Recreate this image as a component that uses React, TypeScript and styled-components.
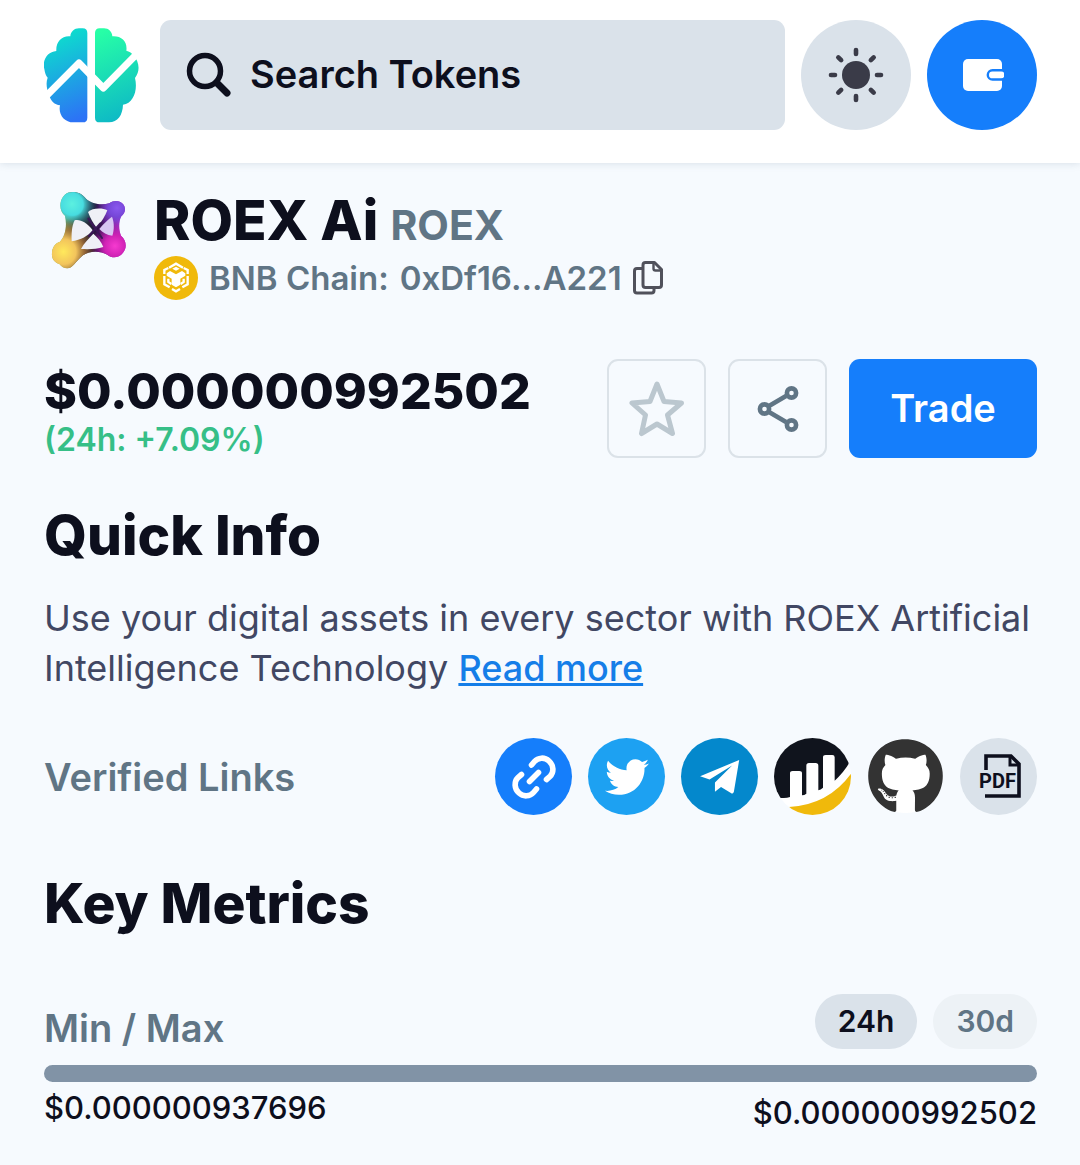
import React, { useState } from "react";
import styled, { createGlobalStyle } from "styled-components";
import { FaGithub, FaTwitter } from "react-icons/fa";

const GlobalStyle = createGlobalStyle`
  * {
    box-sizing: border-box;
  }
  body {
    margin: 0;
    background: #f6fafe;
    color: #0d0f1d;
    font-family: Inter, "Liberation Sans", sans-serif;
  }
  button, input {
    font-family: inherit;
  }
`;

const Header = styled.header`
  display: flex;
  align-items: center;
  gap: 16px;
  padding: 20px 43px 33px 44px;
  background: #fff;
  box-shadow: 0 0 8px rgba(90, 115, 135, 0.22);
`;

const HomeLink = styled.a`
  display: flex;
  flex: none;
  margin-right: 5px;
`;

const SearchBox = styled.label`
  display: flex;
  flex: 1;
  align-items: center;
  gap: 18px;
  min-width: 0;
  height: 110px;
  padding: 0 26px;
  border-radius: 11px;
  background: #dae2ea;
`;

const SearchInput = styled.input`
  flex: 1;
  min-width: 0;
  padding: 0 0 2px;
  border: 0;
  outline: none;
  background: transparent;
  color: #0d0f1d;
  font-size: 38px;
  font-weight: 600;
  &::placeholder {
    color: #0d0f1d;
    opacity: 1;
  }
`;

const RoundButton = styled.button<{ $primary?: boolean }>`
  display: flex;
  flex: none;
  align-items: center;
  justify-content: center;
  width: 110px;
  height: 110px;
  padding: 0;
  border: 0;
  border-radius: 50%;
  background: ${({ $primary }) => ($primary ? "#157efb" : "#dae2ea")};
  cursor: pointer;
`;

const Content = styled.main`
  padding: 23px 43px 24px 44px;
`;

const TokenHead = styled.section`
  display: flex;
  align-items: flex-start;
  gap: 22px;
`;

const TokenTitle = styled.h1`
  margin: 0;
  font-size: 55px;
  font-weight: 800;
  line-height: 68px;
`;

const TokenSymbol = styled.span`
  color: #607585;
  font-size: 41px;
  font-weight: 700;
  line-height: 1;
`;

const ChainRow = styled.div`
  display: flex;
  align-items: center;
  gap: 11px;
  margin-top: 2px;
  color: #607585;
  font-size: 33px;
  font-weight: 600;
  line-height: 44px;
`;

const IconButton = styled.button`
  display: flex;
  padding: 0;
  border: 0;
  background: none;
  cursor: pointer;
`;

const PriceRow = styled.section`
  display: flex;
  align-items: flex-end;
  justify-content: space-between;
  margin-top: 59px;
`;

const Price = styled.div`
  font-size: 50px;
  font-weight: 800;
  line-height: 62px;
`;

const Change = styled.div`
  color: #36bf87;
  font-size: 32px;
  font-weight: 600;
  line-height: 36px;
`;

const Actions = styled.div`
  display: flex;
  gap: 22px;
`;

const OutlineButton = styled.button`
  display: flex;
  align-items: center;
  justify-content: center;
  width: 99px;
  height: 99px;
  padding: 0;
  border: 2px solid #dbe2e8;
  border-radius: 11px;
  background: transparent;
  cursor: pointer;
`;

const TradeButton = styled.button`
  width: 188px;
  height: 99px;
  padding: 0 0 2px;
  border: 0;
  border-radius: 11px;
  background: #157efb;
  color: #fff;
  font-size: 38px;
  font-weight: 600;
  cursor: pointer;
`;

const Heading = styled.h2<{ $top: number }>`
  margin: ${({ $top }) => $top}px 0 0;
  font-size: 55px;
  font-weight: 800;
  line-height: 66px;
`;

const About = styled.p`
  margin: 25px 0 0;
  color: #414763;
  font-size: 36px;
  line-height: 50px;
`;

const ReadMore = styled.a`
  color: #157ee8;
  font-weight: 500;
  text-decoration: underline;
`;

const LinksRow = styled.section`
  display: flex;
  align-items: center;
  justify-content: space-between;
  margin-top: 45px;
`;

const Label = styled.h3`
  margin: 0;
  color: #607585;
  font-size: 38px;
  font-weight: 600;
  line-height: 42px;
`;

const LinkList = styled.nav`
  display: flex;
  gap: 16px;
`;

const RoundLink = styled.a<{ $bg?: string }>`
  display: flex;
  align-items: center;
  justify-content: center;
  width: 77px;
  height: 77px;
  overflow: hidden;
  border-radius: 50%;
  background: ${({ $bg }) => $bg || "transparent"};
  color: #fff;
`;

const GithubBadge = styled.span`
  display: flex;
  border-radius: 50%;
  background: radial-gradient(circle, #fff 36px, transparent 37px);
  color: #333;
`;

const RangeHead = styled.div`
  display: flex;
  align-items: flex-end;
  justify-content: space-between;
  margin-top: 58px;
`;

const Periods = styled.div`
  display: flex;
  gap: 16px;
`;

const PeriodButton = styled.button<{ $active: boolean }>`
  height: 55px;
  padding: 0 23px 2px;
  border: 0;
  border-radius: 28px;
  background: ${({ $active }) => ($active ? "#dae2ea" : "#edf2f6")};
  color: ${({ $active }) => ($active ? "#0d0f1d" : "#607585")};
  font-size: 30px;
  font-weight: 600;
  cursor: pointer;
`;

const Track = styled.div`
  height: 17px;
  margin-top: 16px;
  overflow: hidden;
  border-radius: 9px;
  background: #dae2ea;
`;

const Fill = styled.div`
  height: 100%;
  background: #8193a6;
`;

const RangeValues = styled.div`
  display: flex;
  align-items: flex-start;
  justify-content: space-between;
  margin-top: 4px;
  font-size: 31px;
  font-weight: 500;
`;

const MinValue = styled.span`
  line-height: 44px;
`;

const MaxValue = styled.span`
  line-height: 54px;
`;

const BrainLogo = () => (
  <svg width="95" height="95" viewBox="42 55 285 285">
    <defs>
      <linearGradient id="brainLeft" x1="0.4" y1="0" x2="0.6" y2="1">
        <stop offset="0" stopColor="#0be3cb" />
        <stop offset="1" stopColor="#2c73f6" />
      </linearGradient>
      <linearGradient id="brainRight" x1="0.3" y1="0" x2="0.5" y2="1">
        <stop offset="0" stopColor="#27ffa6" />
        <stop offset="1" stopColor="#0db8c6" />
      </linearGradient>
    </defs>
    <path
      fill="url(#brainLeft)"
      d="M172 70Q172 56 158 56H147C133 56 122 66 121 80C96 77 77 97 79 124C52 126 36 152 43 178C45 190 47 197 53 204C47 220 50 238 57 255C62 274 74 285 90 287C84 314 103 338 130 338H158Q172 338 172 324Z"
    />
    <path
      fill="url(#brainRight)"
      d="M195 70Q195 56 209 56H222C236 56 246 66 247 80C275 78 293 96 289 123C298 125 304 129 309 135C329 156 331 185 315 205C324 242 310 281 279 285C278 316 263 338 237 338H209Q195 338 195 324Z"
    />
    <path
      fill="none"
      stroke="#fff"
      strokeWidth="21"
      strokeLinejoin="round"
      d="M42 266L147 160L220 235L330 123"
    />
  </svg>
);

const SearchIcon = () => (
  <svg width="46" height="46" viewBox="0 0 46 46" fill="none" stroke="#0d0f1d" strokeLinecap="round">
    <circle cx="19" cy="19" r="15.500" strokeWidth="5.500" />
    <path strokeWidth="7" d="M31.500 31.500L41 41" />
  </svg>
);

const SunIcon = () => (
  <svg width="56" height="56" viewBox="-28 -28 56 56">
    <circle r="14" fill="#3a3b48" />
    {[0, 45, 90, 135, 180, 225, 270, 315].map((angle) => (
      <path
        key={angle}
        transform={`rotate(${angle})`}
        stroke="#3a3b48"
        strokeWidth="4.6"
        strokeLinecap="round"
        d="M0 -25V-21"
      />
    ))}
  </svg>
);

const WalletIcon = () => (
  <svg width="44" height="44" viewBox="0 0 44 44">
    <rect x="3" y="6" width="39" height="32" rx="5" fill="#fff" />
    <path fill="#157efb" d="M44 16H32.500a5.900 5.900 0 0 0 0 11.800H44z" />
    <rect x="29" y="18.500" width="15.500" height="6.800" rx="3.400" fill="#fff" />
  </svg>
);

const RoexLogo = () => (
  <svg width="88" height="88" viewBox="12 18 264 264">
    <defs>
      <radialGradient id="roexCyan" gradientUnits="userSpaceOnUse" cx="96" cy="72" r="78">
        <stop offset="0" stopColor="#5cf0e0" />
        <stop offset="0.42" stopColor="#48dde0" />
        <stop offset="1" stopColor="#1c6f86" stopOpacity="0" />
      </radialGradient>
      <radialGradient id="roexPurple" gradientUnits="userSpaceOnUse" cx="231" cy="84" r="66">
        <stop offset="0" stopColor="#8a58ee" />
        <stop offset="0.4" stopColor="#7647d8" />
        <stop offset="1" stopColor="#7a2fc0" stopOpacity="0" />
      </radialGradient>
      <radialGradient id="roexPink" gradientUnits="userSpaceOnUse" cx="225" cy="198" r="76">
        <stop offset="0" stopColor="#f63ad0" />
        <stop offset="0.42" stopColor="#cf22b4" />
        <stop offset="1" stopColor="#a014a0" stopOpacity="0" />
      </radialGradient>
      <radialGradient id="roexYellow" gradientUnits="userSpaceOnUse" cx="70" cy="215" r="100">
        <stop offset="0" stopColor="#ffe95c" />
        <stop offset="0.38" stopColor="#f2c45c" />
        <stop offset="0.65" stopColor="#ab7137" stopOpacity="0.8" />
        <stop offset="1" stopColor="#804a25" stopOpacity="0" />
      </radialGradient>
      <linearGradient id="roexEdge" gradientUnits="userSpaceOnUse" x1="75" y1="0" x2="240" y2="0">
        <stop offset="0" stopColor="#8dbb5d" />
        <stop offset="0.25" stopColor="#29382d" />
        <stop offset="0.6" stopColor="#24103d" />
        <stop offset="1" stopColor="#b438d5" />
      </linearGradient>
      <path
        id="roexShape"
        d="M98 36C116 36 128 44 138 56C157 74 188 75 208 70C221 60 239 60 249 72C259 84 256 100 244 109C236 124 235 147 243 167C259 180 262 204 249 218C237 234 217 236 202 224C181 212 147 212 127 227C113 238 105 253 93 262C80 269 67 263 58 252C45 247 34 237 36 219C36 205 44 190 60 185C76 169 82 137 75 107C63 98 58 80 63 63C69 46 80 36 98 36Z"
      />
    </defs>
    <use href="#roexShape" fill="url(#roexEdge)" />
    <use href="#roexShape" fill="url(#roexCyan)" />
    <use href="#roexShape" fill="url(#roexPurple)" />
    <use href="#roexShape" fill="url(#roexPink)" />
    <use href="#roexShape" fill="url(#roexYellow)" />
    <g fill="#eff0f6">
      <path d="M144 96C156 84 187 83 202 91C196 108 184 126 170 143C158 129 151 113 144 96Z" />
      <path d="M104 121C120 117 140 127 158 151C145 168 122 180 95 184C94 162 95 139 104 121Z" />
      <path d="M160 161C173 172 184 185 190 201C170 208 145 208 123 207C131 190 146 176 160 161Z" />
      <path fill="#d9c6f3" d="M178 147C190 131 205 118 216 110C223 127 223 149 217 167C201 166 188 158 178 147Z" />
    </g>
    <path stroke="#3b1658" strokeWidth="6" strokeLinecap="round" d="M145 116L186 174M181 130L147 168" />
    <circle cx="98" cy="75" r="33" fill="url(#roexCyan)" />
    <circle cx="223" cy="200" r="28" fill="url(#roexPink)" />
  </svg>
);

const BnbIcon = () => (
  <svg width="44" height="44" viewBox="342 228 132 132">
    <circle cx="408" cy="294" r="66" fill="#f0b90b" />
    <g fill="none" stroke="#fff" strokeWidth="7">
      <path d="M387 263L408 251L429 263" />
      <path d="M385 264L373 270V282M431 264L443 270V282M373 288V313L389 322M443 288V313L427 322" />
      <path d="M385 296V306L394 312M431 296V306L422 312" />
      <path d="M396 327L408 334L420 327" />
    </g>
    <path fill="#fff" d="M408 260L419 266L408 272L397 266Z" />
    <path fill="#fff" d="M380 280L390 273L408 283L426 273L436 280V287L421 296V314L408 322L395 314V296L380 287Z" />
  </svg>
);

const CopyIcon = () => (
  <svg width="30" height="34" viewBox="0 0 30 34" fill="none" stroke="#50515b" strokeWidth="3" strokeLinejoin="round">
    <path d="M10 7.500H4Q1.500 7.500 1.500 10V29.500Q1.500 32 4 32H18.500Q21 32 21 29.500V27" />
    <path d="M12.500 1.500H21.500L28.500 8.500V24Q28.500 26.500 26 26.500H12.500Q10 26.500 10 24V4Q10 1.500 12.500 1.500Z" />
    <path strokeWidth="2.400" d="M20.500 2V7.500Q20.500 9.500 22.500 9.500H28" />
  </svg>
);

const StarIcon = () => (
  <svg width="56" height="56" viewBox="0 0 56 56">
    <path
      fill="none"
      stroke="#bbc7cf"
      strokeWidth="5"
      strokeLinejoin="round"
      d="M28 3L35 20.500L52.500 22L38.500 34L43.500 52.500L28 43L12.500 52.500L16.500 34L3 22L21 20.500Z"
    />
  </svg>
);

const ShareIcon = () => (
  <svg width="42" height="46" viewBox="0 0 42 46" fill="none" stroke="#607585" strokeWidth="4.600">
    <path d="M12 20L29 10M12 26L29 36" />
    <circle cx="7.500" cy="23" r="4.600" />
    <circle cx="34.500" cy="7" r="4.600" />
    <circle cx="34.500" cy="39" r="4.600" />
  </svg>
);

const ChainLinkIcon = () => (
  <svg width="44" height="44" viewBox="0 0 44 44" fill="none" stroke="#fff" strokeWidth="5.600" strokeLinecap="round">
    <path d="M19.500 10L22.500 6.500C26 2.500 32.500 1.800 37 6C42 10.500 42 17.500 38 21.500L34.500 24.500" />
    <path d="M24.500 34L21.500 37.500C18 41.500 11.500 42.200 7 38C2 33.500 2 26.500 6 22.500L9.500 19.500" />
    <path d="M17.500 26.500L26.500 17.500" />
  </svg>
);

const TelegramIcon = () => (
  <svg width="40" height="34" viewBox="655 101 118 101">
    <path fill="#fff" d="M771 101L655 149L683 159L750 117L699 168V195L717 181L750 201L755 197Z" />
  </svg>
);

const DexIcon = () => (
  <svg width="77" height="77" viewBox="39 39 231 231">
    <rect x="39" y="39" width="231" height="231" fill="#fff" />
    <path fill="#10141d" d="M39 39H270V105Q250 141 221 167V97Q221 90 214 90H194Q186 90 186 97V188Q179 195 172 196V122Q172 114 164 114H144Q136 114 136 122V206Q130 211 123 211V145Q123 138 115 138H95Q87 138 87 145V216Q74 221 55 218L39 200Z" />
    <path fill="#f0b90b" d="M84 246Q202 239 270 146V270H84Z" />
  </svg>
);

const PdfLabel = styled.text`
  fill: #0d0f1d;
  font-family: Roboto, sans-serif;
  font-size: 20px;
  font-weight: 700;
`;

const PdfIcon = () => (
  <svg width="77" height="77" viewBox="0 0 77 77">
    <g fill="none" stroke="#0d0f1d" strokeWidth="3.600">
      <path d="M26 32V18H51L59 26V58H25" />
      <path strokeWidth="3" d="M50 18V27H59" />
    </g>
    <PdfLabel x="19" y="50">PDF</PdfLabel>
  </svg>
);

const periods = ["24h", "30d"];

export default function App() {
  const [period, setPeriod] = useState("24h");
  const [query, setQuery] = useState("");

  return (
    <>
      <GlobalStyle />
      <Header>
        <HomeLink href="#" aria-label="Home">
          <BrainLogo />
        </HomeLink>
        <SearchBox>
          <SearchIcon />
          <SearchInput
            type="text"
            aria-label="Search Tokens"
            placeholder="Search Tokens"
            value={query}
            onChange={(e) => setQuery(e.target.value)}
          />
        </SearchBox>
        <RoundButton type="button" aria-label="Toggle theme">
          <SunIcon />
        </RoundButton>
        <RoundButton type="button" aria-label="Connect wallet" $primary>
          <WalletIcon />
        </RoundButton>
      </Header>
      <Content>
        <TokenHead>
          <RoexLogo />
          <div>
            <TokenTitle>
              ROEX Ai <TokenSymbol>ROEX</TokenSymbol>
            </TokenTitle>
            <ChainRow>
              <BnbIcon />
              <span>BNB Chain:</span>
              <span>0xDf16...A221</span>
              <IconButton type="button" aria-label="Copy address">
                <CopyIcon />
              </IconButton>
            </ChainRow>
          </div>
        </TokenHead>

        <PriceRow>
          <div>
            <Price>$0.000000992502</Price>
            <Change>(24h: +7.09%)</Change>
          </div>
          <Actions>
            <OutlineButton type="button" aria-label="Add to favorites">
              <StarIcon />
            </OutlineButton>
            <OutlineButton type="button" aria-label="Share">
              <ShareIcon />
            </OutlineButton>
            <TradeButton type="button">Trade</TradeButton>
          </Actions>
        </PriceRow>

        <Heading $top={44}>Quick Info</Heading>
        <About>
          Use your digital assets in every sector with ROEX Artificial
          Intelligence Technology <ReadMore href="#">Read more</ReadMore>
        </About>

        <LinksRow>
          <Label>Verified Links</Label>
          <LinkList>
            <RoundLink href="#" aria-label="Website" $bg="#157efb">
              <ChainLinkIcon />
            </RoundLink>
            <RoundLink href="#" aria-label="Twitter" $bg="#1da1f2">
              <FaTwitter size={44} />
            </RoundLink>
            <RoundLink href="#" aria-label="Telegram" $bg="#0488cc">
              <TelegramIcon />
            </RoundLink>
            <RoundLink href="#" aria-label="Exchange">
              <DexIcon />
            </RoundLink>
            <RoundLink href="#" aria-label="GitHub">
              <GithubBadge>
                <FaGithub size={77} />
              </GithubBadge>
            </RoundLink>
            <RoundLink href="#" aria-label="Whitepaper" $bg="#dae2ea">
              <PdfIcon />
            </RoundLink>
          </LinkList>
        </LinksRow>

        <Heading $top={55}>Key Metrics</Heading>
        <RangeHead>
          <Label>Min / Max</Label>
          <Periods>
            {periods.map((item) => (
              <PeriodButton
                key={item}
                type="button"
                $active={item === period}
                onClick={() => setPeriod(item)}
              >
                {item}
              </PeriodButton>
            ))}
          </Periods>
        </RangeHead>
        <Track>
          <Fill />
        </Track>
        <RangeValues>
          <MinValue>$0.000000937696</MinValue>
          <MaxValue>$0.000000992502</MaxValue>
        </RangeValues>
      </Content>
    </>
  );
}
